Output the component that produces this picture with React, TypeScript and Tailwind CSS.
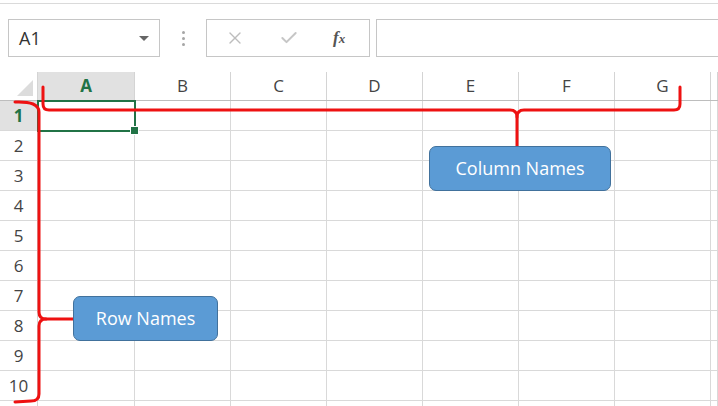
import { X, Check } from 'lucide-react';
import clsx from 'clsx';

const columns = ['A', 'B', 'C', 'D', 'E', 'F', 'G', ''];
const rows = [1, 2, 3, 4, 5, 6, 7, 8, 9, 10, 0];
const colWidths = ['w-[97px]', 'w-[96px]', 'w-[96px]', 'w-[96px]', 'w-[96px]', 'w-[96px]', 'w-[96px]', 'flex-1'];

function Toolbar() {
  return (
    <div className="h-[69px] border-t border-[#dadada] mt-[3px] flex items-start pt-[15px] pl-2">
      <div className="w-[152px] h-[38px] border border-[#c6c6c6] flex items-center justify-between pl-[10px] pr-[10px]">
        <span className="text-[18px] text-[#333]">A1</span>
        <span className="w-0 h-0 border-l-[5px] border-r-[5px] border-t-[5px] border-l-transparent border-r-transparent border-t-[#666] mt-[1px]" />
      </div>
      <div className="w-[46px] h-[38px] flex flex-col items-center justify-center gap-[3px]">
        <span className="w-[3px] h-[3px] bg-[#a6a6a6] rounded-full" />
        <span className="w-[3px] h-[3px] bg-[#a6a6a6] rounded-full" />
        <span className="w-[3px] h-[3px] bg-[#a6a6a6] rounded-full" />
      </div>
      <div className="w-[164px] h-[38px] border border-[#c6c6c6] flex items-center">
        <X className="ml-[18px] w-[20px] h-[20px] text-[#bdbdbd]" strokeWidth={1.6} />
        <Check className="ml-[34px] w-[20px] h-[20px] text-[#c6c6c6]" strokeWidth={2.4} />
        <span className="ml-[34px] text-[17px] italic font-bold text-[#555] font-['Liberation_Serif',serif]">
          f<span className="text-[13px]">x</span>
        </span>
      </div>
      <div className="ml-[6px] flex-1 h-[38px] border border-[#c6c6c6] border-r-0" />
    </div>
  );
}

function Sheet() {
  return (
    <div className="flex flex-col">
      <div className="flex h-[29px] border-b border-[#bdbdbd]">
        <div className="w-[38px] border-r border-[#d4d4d4] relative">
          <svg className="absolute inset-0" width="38" height="28">
            <polygon points="17,24 33,24 33,8" fill="#dcdcdc" />
          </svg>
        </div>
        {columns.map((c, i) => (
          <div
            key={i}
            className={clsx(
              colWidths[i],
              'border-r border-[#d4d4d4] flex items-center justify-center text-[17px]',
              i === 0 ? 'bg-[#e1e1e1] text-[#217346] font-bold' : 'text-[#444]'
            )}
          >
            {c}
          </div>
        ))}
      </div>
      {rows.map((r, idx) => (
        <div key={idx} className="flex h-[30px] border-b border-[#d9d9d9]">
          <div
            className={clsx(
              'w-[38px] border-r border-[#d4d4d4] flex items-center justify-center text-[17px]',
              r === 1 ? 'bg-[#e1e1e1] text-[#217346] font-bold' : 'text-[#444]'
            )}
          >
            {r > 0 ? r : ''}
          </div>
          {colWidths.map((w, i) => (
            <div key={i} className={clsx(w, 'border-r border-[#d9d9d9]')} />
          ))}
        </div>
      ))}
    </div>
  );
}

function Annotations() {
  return (
    <>
      <div className="absolute left-[37px] top-[100px] w-[99px] h-[32px] border-2 border-[#217346]">
        <span className="absolute right-[-5px] bottom-[-5px] w-[7px] h-[7px] bg-[#217346] border border-white box-content" />
      </div>
      <svg className="absolute inset-0 pointer-events-none" width="718" height="406">
        <g fill="none" stroke="#ee1111" strokeWidth="3" strokeLinecap="round" strokeLinejoin="round">
          <path d="M43 87 L43 104 Q43 110 49 110 L510 110 Q517 110 517 117 L517 146" />
          <path d="M517 117 Q517 110 524 110 L674 110 Q680 110 680 104 L680 87" />
          <path d="M15 102 Q39 101 39 112 L39 312 Q39 319 46 319 L74 319" />
          <path d="M46 319 Q39 319 39 326 L39 394 Q39 401 31 401 L15 402" />
        </g>
      </svg>
      <div className="absolute left-[429px] top-[146px] w-[182px] h-[45px] rounded-[7px] bg-[#5b9bd5] border border-[#41719c] flex items-center justify-center text-white text-[18px]">
        Column Names
      </div>
      <div className="absolute left-[73px] top-[296px] w-[145px] h-[45px] rounded-[7px] bg-[#5b9bd5] border border-[#41719c] flex items-center justify-center text-white text-[18px]">
        Row Names
      </div>
    </>
  );
}

export default function App() {
  return (
    <div className="relative w-[718px] h-[406px] overflow-hidden bg-white font-['Open_Sans',sans-serif]">
      <Toolbar />
      <Sheet />
      <Annotations />
    </div>
  );
}
